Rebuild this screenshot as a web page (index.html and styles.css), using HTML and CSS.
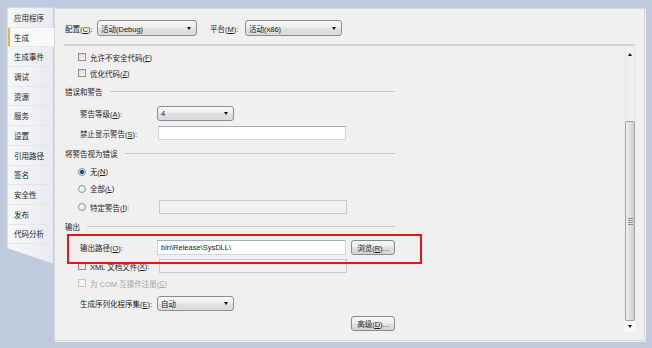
FILE: index.html
```html
<!DOCTYPE html>
<html lang="zh-CN">
<head>
  <meta charset="UTF-8">
  <meta name="viewport" content="width=device-width, initial-scale=1.0">
  <title>项目属性 - 生成</title>
  <link rel="stylesheet" href="styles.css">
</head>
<body>
  <div class="window">
    <!-- 左侧属性页 -->
    <ul class="tabs">
      <li>应用程序</li>
      <li class="active">生成</li>
      <li>生成事件</li>
      <li>调试</li>
      <li>资源</li>
      <li>服务</li>
      <li>设置</li>
      <li>引用路径</li>
      <li>签名</li>
      <li>安全性</li>
      <li>发布</li>
      <li>代码分析</li>
    </ul>

    <div class="panel">
      <!-- 配置 / 平台 -->
      <div class="config-bar">
        <span class="bar-label">配置(<u>C</u>):</span>
        <div class="combo config"><span>活动(Debug)</span><i class="caret"></i></div>
        <span class="bar-label platform">平台(<u>M</u>):</span>
        <div class="combo platform-combo"><span>活动(x86)</span><i class="caret"></i></div>
      </div>
      <div class="rule"></div>

      <div class="body">
        <div class="form">
          <div class="row tick"><span class="box"></span>允许不安全代码(<u>F</u>)</div>
          <div class="row tick"><span class="box"></span>优化代码(<u>Z</u>)</div>

          <div class="group"><span>错误和警告</span></div>
          <div class="row field first"><label>警告等级(<u>A</u>):</label><div class="combo small"><span>4</span><i class="caret"></i></div></div>
          <div class="row field"><label>禁止显示警告(<u>S</u>):</label><div class="text-box"></div></div>

          <div class="group"><span>将警告视为错误</span></div>
          <div class="row tick radio-row"><span class="radio on"></span>无(<u>N</u>)</div>
          <div class="row tick radio-row"><span class="radio"></span>全部(<u>L</u>)</div>
          <div class="row field opt-row"><span class="opt"><span class="radio"></span>特定警告(<u>I</u>):</span><div class="text-box off"></div></div>

          <div class="group tight"><span>输出</span></div>
          <div class="row field marked"><label>输出路径(<u>O</u>):</label><div class="text-box path">bin\Release\SysDLL\</div><button>浏览(<u>R</u>)...</button></div>
          <div class="row opt-row xml"><span class="opt"><span class="box"></span>XML 文档文件(<u>X</u>):</span><div class="text-box off"></div></div>
          <div class="row tick disabled com"><span class="box"></span>为 COM 互操作注册(<u>C</u>)</div>
          <div class="row field"><label>生成序列化程序集(<u>E</u>):</label><div class="combo small"><span>自动</span><i class="caret"></i></div></div>
          <div class="row field advanced"><button>高级(<u>D</u>)...</button></div>
        </div>

        <div class="scrollbar">
          <div class="sb-btn"><i class="up"></i></div>
          <div class="thumb"><span class="grip"></span></div>
          <div class="sb-btn down"><i class="caret"></i></div>
        </div>
      </div>
    </div>
  </div>
</body>
</html>
```

FILE: styles.css
```css
* {
  margin: 0;
  padding: 0;
  box-sizing: border-box;
}

body {
  width: 652px;
  height: 348px;
  overflow: hidden;
  background: #bfcbdc;
  font-family: "Liberation Sans", "Noto Sans CJK SC", sans-serif;
  font-size: 7.5px;
  color: #1c1c1c;
}

u {
  text-decoration: underline;
}

.window {
  display: flex;
  padding: 7px 7px 0 7px;
}

/* 属性页标签 */
.tabs {
  list-style: none;
  width: 47px;
  height: 257px;
  border-top: 1px solid #d3d8e0;
  border-left: 1px solid #dde1e7;
  border-right: 1px solid #c9ced7;
  border-radius: 3px 0 0 0;
  background: linear-gradient(to right, #f7f8fa, #e7eaef);
  clip-path: polygon(0 0, 100% 0, 100% 100%, 0 calc(100% - 16px));
}

.tabs li {
  display: flex;
  align-items: center;
  height: 19.7px;
  padding-left: 6px;
  border-bottom: 1px solid #e3e6eb;
}

.tabs li.active {
  margin-right: -1px;
  background: #f9f9f9;
  box-shadow: inset 2px 0 0 #f2ae45;
}

.panel {
  display: flex;
  flex-direction: column;
  width: 591px;
  height: 333px;
  margin-top: 1px;
  background: #f0f0f0;
  border: 1px solid #d4d9e1;
  box-shadow: 1px 1px 0 #e9edf3;
}

.config-bar {
  display: flex;
  align-items: center;
  height: 35px;
  padding: 3px 9px 0 10px;
}

.bar-label {
  width: 32px;
}

.bar-label.platform {
  width: 35px;
  margin-left: 13px;
}

.combo {
  display: flex;
  align-items: center;
  justify-content: space-between;
  height: 16px;
  padding: 0 5px 0 3px;
  border: 1px solid #8e8e8e;
  border-radius: 3px;
  background: linear-gradient(#f7f7f7, #ececec 50%, #e2e2e2 50%, #dadada);
}

.combo.config {
  width: 100px;
}

.combo.platform-combo {
  width: 97px;
}

.combo.small {
  width: 77px;
  height: 15px;
}

.caret {
  width: 0;
  height: 0;
  border-left: 2.5px solid transparent;
  border-right: 2.5px solid transparent;
  border-top: 3px solid #111;
}

.rule {
  height: 2px;
  margin: 0 9px;
  background: #d3d3d3;
}

.body {
  display: flex;
  flex: 1;
  min-height: 0;
}

.form {
  flex: 1;
  padding: 3px 0 0 9px;
}

.row {
  display: flex;
  align-items: center;
  height: 20px;
}

.row.tick {
  height: 16px;
  padding-left: 14px;
}

.row.radio-row {
  height: 17px;
}

.row.field {
  padding-left: 16px;
}

.row.field.first {
  margin-top: 2px;
}

.row.field label {
  width: 77px;
}

.row.opt-row {
  padding-left: 14px;
}

.opt {
  display: flex;
  align-items: center;
  width: 80px;
}

.row.xml {
  height: 14px;
}

.row.com {
  height: 20px;
}

.row.advanced {
  padding-left: 287px;
}

.disabled {
  color: #a3a3a3;
}

.box {
  width: 8px;
  height: 8px;
  margin-right: 4px;
  border: 1px solid #8f8f8f;
  background: linear-gradient(135deg, #d8d8d8, #f8f8f8);
}

.disabled .box {
  border-color: #c6c6c6;
  background: #f3f3f3;
}

.radio {
  width: 8px;
  height: 8px;
  margin-right: 4px;
  border: 1px solid #939393;
  border-radius: 50%;
  background: radial-gradient(circle at 40% 40%, #fbfbfb, #dcdcdc);
}

.radio.on {
  background: radial-gradient(circle, #1d4f9a 0 1.6px, #7ea6d8 2.2px, #f2f2f2 2.8px);
}

/* 分组标题 */
.group {
  display: flex;
  align-items: center;
  width: 331px;
  height: 20px;
  padding-left: 1px;
}

.group.tight {
  height: 18px;
}

.group::after {
  content: "";
  flex: 1;
  height: 1px;
  margin-left: 7px;
  background: #cacaca;
}

.text-box {
  display: flex;
  align-items: center;
  width: 188px;
  height: 14px;
  margin-left: 1px;
  padding-left: 2px;
  background: #fff;
  border: 1px solid #d2d5db;
  border-top-color: #abadb3;
}

.text-box.off {
  background: #f1f1f1;
  border-color: #c9c9c9;
}

.text-box.path {
  width: 189px;
  height: 15px;
  margin-left: 0;
  padding-left: 3px;
}

button {
  width: 44px;
  height: 15px;
  font: inherit;
  color: #1c1c1c;
  border: 1px solid #8a8a8a;
  border-radius: 3px;
  background: linear-gradient(#f6f6f6, #ececec 50%, #dfdfdf 50%, #d6d6d6);
}

.marked {
  position: relative;
  height: 24px;
}

.marked button {
  margin-left: 5px;
}

/* 红色标注框 */
.marked::after {
  content: "";
  position: absolute;
  left: 3px;
  top: -1px;
  width: 351px;
  height: 26px;
  border: 2px solid #e8141c;
}

.scrollbar {
  display: flex;
  flex-direction: column;
  width: 10px;
  margin: 2px 9px 8px 0;
  box-shadow: inset 1px 0 0 #e4e4e4, inset -1px 0 0 #e4e4e4;
}

.sb-btn {
  display: flex;
  align-items: center;
  justify-content: center;
  height: 12px;
}

.sb-btn.down {
  height: 11px;
  margin-top: auto;
  background: #f8f8f8;
}

.up {
  width: 0;
  height: 0;
  border-left: 2.5px solid transparent;
  border-right: 2.5px solid transparent;
  border-bottom: 3px solid #111;
}

.thumb {
  display: flex;
  align-items: center;
  justify-content: center;
  height: 200px;
  margin-top: 61px;
  border: 1px solid #a2a2a2;
  border-radius: 2px;
  background: linear-gradient(to right, #f2f2f2, #dedede 50%, #cfcfcf);
}

.grip {
  width: 5px;
  height: 7px;
  background: repeating-linear-gradient(#8c8c8c 0 1px, #e8e8e8 1px 2px);
}
```
